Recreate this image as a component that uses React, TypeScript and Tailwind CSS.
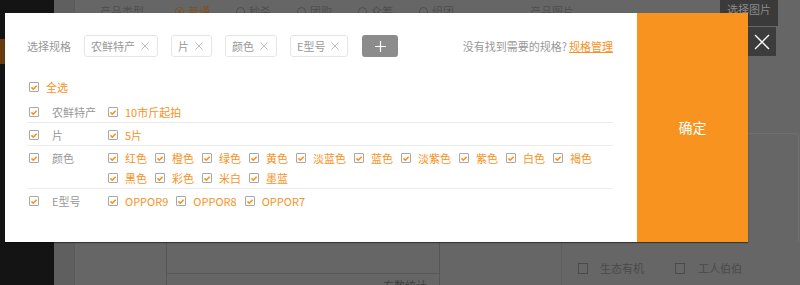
import React from 'react';

const ORANGE = '#f7931e';

const specTags = ['农鲜特产', '片', '颜色', 'E型号'];

const specRows: { name: string; values: string[] }[] = [
  { name: '农鲜特产', values: ['10市斤起拍'] },
  { name: '片', values: ['5片'] },
  {
    name: '颜色',
    values: ['红色', '橙色', '绿色', '黄色', '淡蓝色', '蓝色', '淡紫色', '紫色', '白色', '褐色', '黑色', '彩色', '米白', '墨蓝'],
  },
  { name: 'E型号', values: ['OPPOR9', 'OPPOR8', 'OPPOR7'] },
];

// small checked box used all over the dialog
const Check: React.FC = () => (
  <span className="w-[10px] h-[10px] shrink-0 border border-[#a8a8a8] bg-white rounded-[1px] flex items-center justify-center">
    <svg width="6" height="5" viewBox="0 0 6 5">
      <path d="M0.4 2.4 L2.3 4.2 L5.6 0.7" stroke={ORANGE} strokeWidth="1.6" fill="none" />
    </svg>
  </span>
);

const Radio: React.FC<{ label: string; active?: boolean }> = ({ label, active }) => (
  <div className="flex items-center gap-[4px] mr-[26px]">
    <span
      className={`w-[9px] h-[9px] rounded-full border flex items-center justify-center ${
        active ? 'border-[#7d5128]' : 'border-[#4e4e4e]'
      }`}
    >
      {active && <span className="w-[3px] h-[3px] rounded-full bg-[#7d5128]" />}
    </span>
    <span className={active ? 'text-[#7d5128]' : 'text-[#4e4e4e]'}>{label}</span>
  </div>
);

// the dimmed page behind the dialog
const Backdrop: React.FC = () => (
  <div className="flex w-full h-full text-[11px] leading-[16px]">
    <div className="w-[54px] h-full bg-[#141414] flex flex-col">
      <div className="mt-[39px] h-[25px] bg-[#673d10]" />
    </div>
    <div className="w-[21px] h-full bg-[#5f5f5f] border-r border-[#5a5a5a]" />
    <div className="flex-1 flex flex-col">
      <div className="h-[26px] shrink-0 flex items-start pl-[25px] pt-[3px]">
        <span className="text-[#4e4e4e] mr-[31px]">产品类型</span>
        <Radio label="普通" active />
        <Radio label="秒杀" />
        <Radio label="团购" />
        <Radio label="众筹" />
        <Radio label="组团" />
        <span className="text-[#4e4e4e] ml-[50px]">产品图片</span>
        <div className="ml-auto mr-[22px] -mt-[3px] w-[58px] h-[26px] bg-[#3a3a3a] text-[#8a8a8a] flex justify-center pt-[1px]">
          选择图片
        </div>
      </div>
      <div className="flex-1 flex justify-end">
        <div className="mt-[107px] mr-[1px] w-[69px] border-t border-r border-l border-[#707070] rounded-t-[4px]" />
      </div>
      <div className="h-[43px] shrink-0 flex overflow-hidden">
        <div className="w-[91px]" />
        <div className="w-[274px] border-l border-r border-[#575757] flex flex-col">
          <div className="h-[32px] shrink-0 border-b border-[#575757]" />
          <div className="shrink-0 flex justify-end pr-[12px] pt-[3px] text-[#3f3f3f]">方数统计</div>
        </div>
        <div className="w-[122px] border-r border-[#5e5e5e]" />
        <div className="flex items-start pt-[18px] pl-[16px] text-[#4a4a4a]">
          <span className="w-[10px] h-[11px] border border-[#4a4a4a] mt-[3px]" />
          <span className="ml-[12px] mr-[31px]">生态有机</span>
          <span className="w-[10px] h-[11px] border border-[#4a4a4a] mt-[3px]" />
          <span className="ml-[13px]">工人伯伯</span>
        </div>
      </div>
    </div>
  </div>
);

const SpecDialog: React.FC = () => (
  <div className="absolute left-[5px] top-[13px] w-[743px] h-[229px] flex shadow-[0_1px_1px_rgba(0,0,0,0.45)]">
    <div className="w-[632px] h-full bg-white pl-[22px] pr-[24px] pt-[22px] text-[11px]">
      {/* header: chosen specs */}
      <div className="h-[22px] flex items-center">
        <span className="text-[#999] mr-[13px]">选择规格</span>
        {specTags.map((tag, i) => (
          <div
            key={tag}
            className={`h-[22px] flex items-center border border-[#e6e6e6] rounded-[3px] pl-[6px] pr-[8px] gap-[6px] ${
              i > 0 ? 'ml-[13px]' : ''
            }`}
          >
            <span className="text-[#999]">{tag}</span>
            <svg width="8" height="8" viewBox="0 0 8 8">
              <path d="M0.5 0.5 L7.5 7.5 M7.5 0.5 L0.5 7.5" stroke="#bbb" strokeWidth="1" />
            </svg>
          </div>
        ))}
        <button className="ml-[14px] w-[36px] h-[22px] rounded-[3px] bg-[#8c8c8c] flex items-center justify-center">
          <svg width="11" height="11" viewBox="0 0 11 11">
            <path d="M5.5 0 V11 M0 5.5 H11" stroke="#fff" strokeWidth="1.2" />
          </svg>
        </button>
        <span className="ml-auto text-[#999]">没有找到需要的规格?</span>
        <a className="ml-[2px] underline" style={{ color: ORANGE }}>
          规格管理
        </a>
      </div>

      {/* select all */}
      <div className="mt-[20px] h-[20px] flex items-center pl-[2px]">
        <Check />
        <span className="ml-[7px]" style={{ color: ORANGE }}>
          全选
        </span>
      </div>

      {/* spec rows */}
      <div className="mt-[3px]">
        {specRows.map((row, i) => (
          <div
            key={row.name}
            className={`flex pt-[2px] leading-[20px] ${i < specRows.length - 1 ? 'border-b border-[#ececec]' : ''}`}
          >
            <div className="w-[81px] shrink-0 h-[20px] flex items-center pl-[2px]">
              <Check />
              <span className="ml-[13px] text-[#999]">{row.name}</span>
            </div>
            <div className="flex flex-wrap flex-1">
              {row.values.map(v => (
                <div key={v} className="h-[20px] flex items-center gap-[7px] mr-[8px]">
                  <Check />
                  <span style={{ color: ORANGE }}>{v}</span>
                </div>
              ))}
            </div>
          </div>
        ))}
      </div>
    </div>
    <button className="w-[111px] h-full bg-[#f7931e] text-white text-[14px] flex items-center justify-center">
      确定
    </button>
  </div>
);

export default function App() {
  return (
    <div className="relative w-[800px] h-[285px] overflow-hidden bg-[#666] font-['Noto_Sans_CJK_SC','Microsoft_YaHei',sans-serif]">
      <Backdrop />
      <SpecDialog />
      <button className="absolute left-[748px] top-[27px] w-[28px] h-[29px] bg-[#3c3c3c] flex items-center justify-center">
        <svg width="16" height="16" viewBox="0 0 16 16">
          <path d="M1 1 L15 15 M15 1 L1 15" stroke="#fff" strokeWidth="1.4" />
        </svg>
      </button>
    </div>
  );
}
